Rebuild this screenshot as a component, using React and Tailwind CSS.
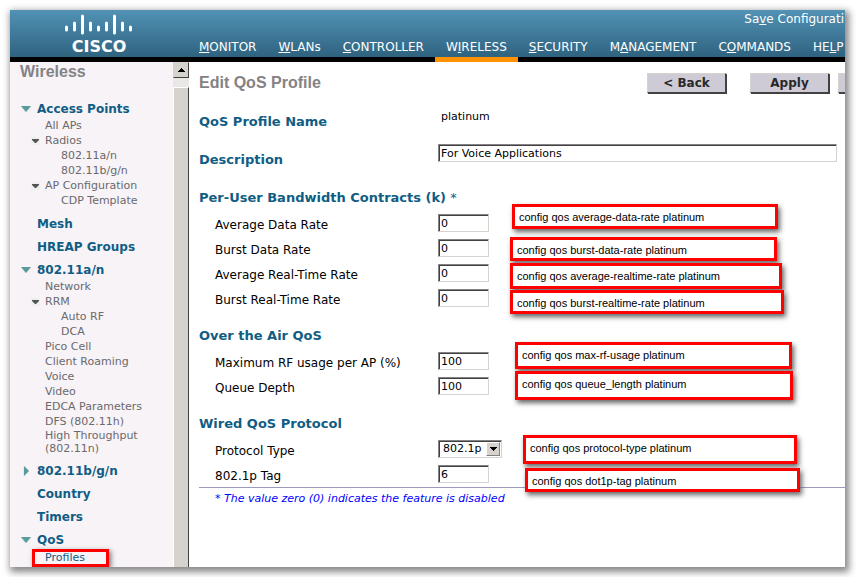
import React from 'react';
import clsx from 'clsx';

const NAV = [
	['', 'M', 'ONITOR'],
	['', 'W', 'LANs'],
	['', 'C', 'ONTROLLER'],
	['W', 'I', 'RELESS'],
	['', 'S', 'ECURITY'],
	['M', 'A', 'NAGEMENT'],
	['C', 'O', 'MMANDS'],
	['HE', 'L', 'P'],
];

const TREE = [
	{
		label: 'Access Points',
		arrow: 'down',
		items: [
			{ label: 'All APs' },
			{ label: 'Radios', open: true },
			{ label: '802.11a/n', nested: true },
			{ label: '802.11b/g/n', nested: true },
			{ label: 'AP Configuration', open: true },
			{ label: 'CDP Template', nested: true },
		],
	},
	{ label: 'Mesh' },
	{ label: 'HREAP Groups' },
	{
		label: '802.11a/n',
		arrow: 'down',
		items: [
			{ label: 'Network' },
			{ label: 'RRM', open: true },
			{ label: 'Auto RF', nested: true },
			{ label: 'DCA', nested: true },
			{ label: 'Pico Cell' },
			{ label: 'Client Roaming' },
			{ label: 'Voice' },
			{ label: 'Video' },
			{ label: 'EDCA Parameters' },
			{ label: 'DFS (802.11h)' },
			{ label: 'High Throughput (802.11n)', wrap: true },
		],
	},
	{ label: '802.11b/g/n', arrow: 'right' },
	{ label: 'Country' },
	{ label: 'Timers' },
	{ label: 'QoS', arrow: 'down', items: [{ label: 'Profiles', current: true }] },
];

const SECTIONS = [
	{
		title: 'Per-User Bandwidth Contracts (k)',
		star: true,
		fields: [
			{
				id: 'avg-data',
				label: 'Average Data Rate',
				value: '0',
				note: 'config qos average-data-rate platinum',
				noteClass: '-top-[7px] left-[74px] w-[266px] h-[25px]',
			},
			{
				id: 'burst-data',
				label: 'Burst Data Rate',
				value: '0',
				note: 'config qos burst-data-rate platinum',
				noteClass: 'top-px left-[72px] w-[267px] h-[24px]',
			},
			{
				id: 'avg-rt',
				label: 'Average Real-Time Rate',
				value: '0',
				note: 'config qos average-realtime-rate platinum',
				noteClass: 'top-[2px] left-[72px] w-[272px] h-[26px]',
			},
			{
				id: 'burst-rt',
				label: 'Burst Real-Time Rate',
				value: '0',
				note: 'config qos burst-realtime-rate platinum',
				noteClass: 'top-[4px] left-[72px] w-[274px] h-[24px]',
			},
		],
	},
	{
		title: 'Over the Air QoS',
		fields: [
			{
				id: 'max-rf',
				label: 'Maximum RF usage per AP (%)',
				value: '100',
				note: 'config qos max-rf-usage platinum',
				noteClass: '-top-[7px] left-[77px] w-[277px] h-[27px]',
			},
			{
				id: 'queue',
				label: 'Queue Depth',
				value: '100',
				note: 'config qos queue_length platinum',
				noteClass: '-top-[3px] left-[77px] w-[278px] h-[29px]',
			},
		],
	},
	{
		title: 'Wired QoS Protocol',
		fields: [
			{
				id: 'protocol',
				label: 'Protocol Type',
				value: '802.1p',
				select: true,
				note: 'config qos protocol-type platinum',
				noteClass: '-top-[2px] left-[85px] w-[274px] h-[29px]',
			},
			{
				id: 'tag',
				label: '802.1p Tag',
				value: '6',
				note: 'config qos dot1p-tag platinum',
				noteClass: 'top-[6px] left-[87px] w-[275px] h-[24px]',
			},
		],
	},
];

const INPUT =
	'block h-[18px] border border-t-[#848284] border-l-[#848284] border-r-[#d6d3ce] border-b-[#d6d3ce] bg-white px-[2px] text-[11px] leading-4 text-black shadow-[inset_1px_1px_0_#424142] outline-none';

function Logo() {
	// x, top, bottom of each bar
	const bars = [
		[66, 27, 30],
		[74, 23, 30],
		[82, 16, 33],
		[90, 23, 30],
		[98, 27, 30],
		[106, 23, 30],
		[114, 16, 33],
		[122, 23, 30],
		[130, 27, 30],
	];
	return (
		<svg viewBox="55 10 90 47" className="ml-[45px] h-[47px] w-[90px] shrink-0 overflow-visible" aria-label="Cisco">
			{bars.map(([x, y1, y2]) => (
				<line key={x} x1={x + 0.5} x2={x + 0.5} y1={y1} y2={y2} stroke="#fff" strokeWidth="3" strokeLinecap="round" />
			))}
			<text x="99" y="52" textAnchor="middle" fill="#fff" fontSize="16" fontWeight="700" fontFamily="DejaVu Sans, sans-serif">
				CISCO
			</text>
		</svg>
	);
}

function Arrow({ dir, small }) {
	if (small) {
		return (
			<svg viewBox="0 0 9 8" className="h-2 w-[9px]">
				<rect width="9" height="8" fill="#efefef" />
				<path d="M1 2h7v1L5 6H4L1 3z" fill="#525552" />
			</svg>
		);
	}
	return (
		<svg viewBox="0 0 12 12" className="h-3 w-3">
			<path d={dir === 'down' ? 'M1 3h10v2L7 9H5L1 5z' : 'M3 1h2l4 4v2L5 11H3z'} fill="#e7ebe7" />
			<path d={dir === 'down' ? 'M1 3h10L6 9z' : 'M4 1l5 5l-5 5z'} fill="#5a9a9c" />
		</svg>
	);
}

function TreeItem({ item }) {
	const link = (
		<a
			href="#"
			className={clsx(
				item.wrap && 'w-[100px] leading-[13px]',
				item.current && 'leading-3 text-[#105d84]',
				!item.wrap && !item.current && 'whitespace-nowrap leading-[15px]',
				!item.current && 'text-[#6b696b]',
			)}
		>
			{item.label}
		</a>
	);
	if (item.current) {
		return (
			<li className="ml-[22px] flex h-[18px] w-[77px] border-[3px] border-[#ff0000] pl-[10px] shadow-[2px_2px_5px_#777]">
				{link}
			</li>
		);
	}
	return (
		<li className={clsx('flex items-center', item.nested ? 'pl-[51px]' : item.open ? 'pl-[21px]' : 'pl-[35px]')}>
			{item.open && (
				<span className="mr-[5px]">
					<Arrow small />
				</span>
			)}
			{link}
		</li>
	);
}

function Sidebar() {
	return (
		<aside className="flex shrink-0 bg-[#f7f3f7]">
			<div className="w-[163px]">
				<h2 className="pl-[10px] font-['Liberation_Sans',sans-serif] text-base font-bold leading-5 text-[#848284]">Wireless</h2>
				<ul className="pt-[13px] text-[11px]">
					{TREE.map((group) => (
						<li key={group.label} className="pt-[5px]">
							<div className="flex h-[18px] items-center pl-[10px]">
								<span className="flex w-[17px]">{group.arrow && <Arrow dir={group.arrow} />}</span>
								<a href="#" className="whitespace-nowrap text-xs font-bold text-[#105d84]">
									{group.label}
								</a>
							</div>
							{group.items && (
								<ul className={group.items.length > 1 ? 'pb-[2px]' : ''}>
									{group.items.map((item) => (
										<TreeItem key={item.label} item={item} />
									))}
								</ul>
							)}
						</li>
					))}
				</ul>
			</div>
			<div className="flex w-4 flex-col bg-[#e9e8e4]">
				<button
					aria-label="Scroll up"
					className="flex h-4 items-center justify-center border border-t-[#d6d3ce] border-l-[#d6d3ce] border-r-[#424142] border-b-[#424142] bg-[#d6d3ce]"
				>
					<svg viewBox="0 0 7 4" className="h-1 w-[7px]">
						<path d="M3 0h1v1h1v1h1v1h1v1H0V3h1V2h1V1h1z" />
					</svg>
				</button>
				<div className="mt-[9px] flex-1 border border-b-0 border-t-white border-l-white border-r-[#424142] bg-[#d6d3ce]" />
			</div>
		</aside>
	);
}

function Note({ className, children }) {
	return (
		<div
			className={clsx(
				"absolute whitespace-nowrap border-[3px] border-[#ff0000] bg-white pl-1 pt-[2px] font-['Liberation_Sans',sans-serif] text-[11px] leading-4 shadow-[2px_3px_5px_#666]",
				className,
			)}
		>
			{children}
		</div>
	);
}

function Field({ field }) {
	return (
		<div className="flex h-[25px]">
			<label htmlFor={field.id} className="w-[239px] shrink-0 pl-4 pt-1 text-xs leading-5">
				{field.label}
			</label>
			<div className="relative pt-[3px]">
				{field.select ? (
					<div className="relative">
						<select id={field.id} className={clsx(INPUT, 'w-[64px] appearance-none pl-1')} defaultValue={field.value}>
							<option>{field.value}</option>
						</select>
						<span className="pointer-events-none absolute right-[2px] top-[2px] flex h-[14px] w-[14px] items-center justify-center border border-t-white border-l-white border-r-[#848284] border-b-[#848284] bg-[#d6d3ce]">
							<svg viewBox="0 0 7 4" className="h-1 w-[7px]">
								<path d="M0 0h7v1H6v1H5v1H4v1H3V3H2V2H1V1H0z" />
							</svg>
						</span>
					</div>
				) : (
					<input id={field.id} className={clsx(INPUT, 'w-[51px]')} defaultValue={field.value} />
				)}
				<Note className={field.noteClass}>{field.note}</Note>
			</div>
		</div>
	);
}

const HEADING = 'text-[13px] font-bold leading-5 text-[#105d84]';
const BUTTON =
	'h-5 border border-t-[#d6d3ce] border-l-[#d6d3ce] border-r-[#424142] border-b-[#424142] bg-[#cecbd6] text-xs font-bold leading-4 text-[#292829] shadow-[1px_1px_0_#424142]';

export default function App() {
	return (
		<div className="flex min-h-screen bg-white pb-[10px] pl-[10px] pr-[11px] pt-[10px] font-['DejaVu_Sans',sans-serif] text-[11px] text-black">
			<div className="flex min-w-0 flex-1 flex-col overflow-hidden bg-white shadow-[2px_3px_7px_2px_#888]">
				<header className="flex h-[52px] border-b-[5px] border-black bg-linear-to-b from-[#5292b5] to-[#2f6380] text-white">
					<Logo />
					<div className="ml-[43px] flex min-w-0 flex-1 flex-col">
						<a href="#" className="ml-auto whitespace-nowrap pr-px text-xs leading-[19px]">
							Sa<u>v</u>e Configurati
						</a>
						<nav className="-mb-[5px] flex flex-1">
							{NAV.map(([pre, key, post]) => (
								<a
									key={post}
									href="#"
									className={clsx(
										'border-b-[5px] px-[11px] pt-2 text-xs leading-5',
										post === 'RELESS' ? 'border-[#ff9200]' : 'border-transparent',
									)}
								>
									{pre}
									<u>{key}</u>
									{post}
								</a>
							))}
						</nav>
					</div>
				</header>
				<div className="flex flex-1">
					<Sidebar />
					<main className="min-w-0 flex-1 pl-[10px]">
						<div className="flex items-start pt-[11px]">
							<h1 className="font-['Liberation_Sans',sans-serif] text-base font-bold leading-5 text-[#848284]">Edit QoS Profile</h1>
							<button className={clsx(BUTTON, 'ml-auto w-[79px]')}>&lt; Back</button>
							<button className={clsx(BUTTON, 'ml-6 w-[79px]')}>Apply</button>
							<button aria-label="Next" className={clsx(BUTTON, 'ml-[9px] w-[7px] border-r-0')} />
						</div>
						<form>
							<div className="mt-[19px] flex">
								<h2 className={clsx(HEADING, 'w-[242px]')}>QoS Profile Name</h2>
								<span className="leading-[10px]">platinum</span>
							</div>
							<div className="mb-[3px] mt-3 flex pr-2">
								<label htmlFor="description" className={clsx(HEADING, 'w-[239px] shrink-0 pt-[6px]')}>
									Description
								</label>
								<input id="description" className={clsx(INPUT, 'min-w-0 flex-1')} defaultValue="For Voice Applications" />
							</div>
							{SECTIONS.map((section) => (
								<section key={section.title} className="pt-[15px]">
									<h2 className={clsx(HEADING, 'mb-[3px]')}>
										{section.title}
										{section.star && <span className="font-normal"> *</span>}
									</h2>
									{section.fields.map((field) => (
										<Field key={field.id} field={field} />
									))}
								</section>
							))}
							<p className="border-t border-[#9c9abd] pl-4 leading-[22px] text-[#0000ff] italic">
								* The value zero (0) indicates the feature is disabled
							</p>
						</form>
					</main>
				</div>
			</div>
		</div>
	);
}
